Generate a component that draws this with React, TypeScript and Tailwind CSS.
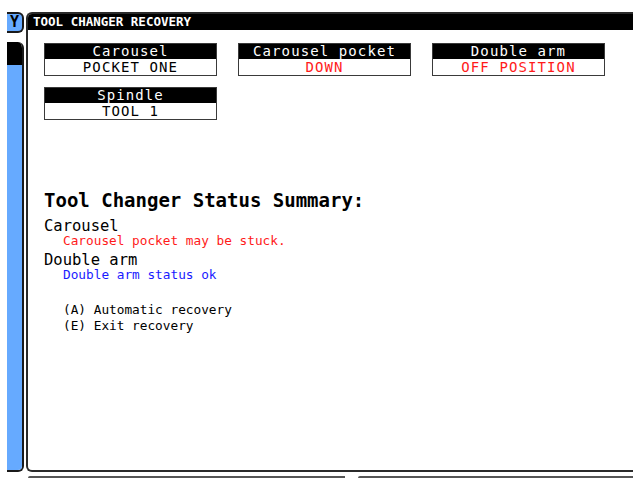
const mono = { fontFamily: '"DejaVu Sans Mono", "Liberation Mono", monospace' };

type Field = { label: string; value: string; alert?: boolean };

const fields: Field[] = [
  { label: "Carousel", value: "POCKET ONE" },
  { label: "Carousel pocket", value: "DOWN", alert: true },
  { label: "Double arm", value: "OFF POSITION", alert: true },
  { label: "Spindle", value: "TOOL 1" },
];

function FieldBox({ label, value, alert }: Field) {
  return (
    <div className="flex flex-col border border-[#3a3a3a]">
      <div className="h-[15px] bg-black text-center text-[14px] leading-[15px] tracking-[1.1px] text-white">
        {label}
      </div>
      <div
        className={`h-[16px] bg-white text-center text-[14px] leading-[16px] tracking-[1.1px] ${
          alert ? "text-[#ff1a1a]" : "text-black"
        }`}
      >
        {value}
      </div>
    </div>
  );
}

function SideRail() {
  return (
    <div className="flex w-[17px] shrink-0 flex-col">
      <div className="flex h-[21px] shrink-0 items-center justify-end overflow-hidden rounded-r-[6px] border-2 border-l-0 border-[#1a1a1a] bg-[#66aaff] pr-[3px] text-[15px] font-bold leading-[17px] text-black">
        Y
      </div>
      <div className="mt-[9px] flex flex-1 flex-col overflow-hidden rounded-tr-[6px] rounded-br-[6px] border-r-2 border-b-2 border-[#1a1a1a]">
        <div className="h-[23px] bg-black" />
        <div className="flex-1 bg-[#66aaff]" />
      </div>
    </div>
  );
}

export default function App() {
  return (
    <div className="flex h-[478px] w-[633px] flex-col overflow-hidden bg-white" style={mono}>
      <div className="flex flex-1 pt-[12px] pl-[7px]">
        <SideRail />

        <div className="ml-[2px] flex flex-1 flex-col overflow-hidden rounded-l-[6px] border-2 border-r-0 border-[#2a2a2a] bg-white">
          <div className="h-[16px] bg-black pl-[5px] text-[12.5px] font-bold leading-[16px] text-white">
            TOOL CHANGER RECOVERY
          </div>

          <div className="pt-[13px] pl-[16px]">
            <div className="grid grid-cols-[173px_173px_173px] gap-x-[21px] gap-y-[11px]">
              {fields.map((f) => (
                <FieldBox key={f.label} {...f} />
              ))}
            </div>

            <div className="mt-[69px] text-[19px] font-bold leading-[22px] text-black">
              Tool Changer Status Summary:
            </div>
            <div className="mt-[7px] text-[15.5px] leading-[16px] text-black">Carousel</div>
            <div className="pl-[19px] text-[12.75px] leading-[14px] text-[#ff1a1a]">
              Carousel pocket may be stuck.
            </div>
            <div className="mt-[4px] text-[15.5px] leading-[16px] text-black">Double arm</div>
            <div className="pl-[19px] text-[12.75px] leading-[14px] text-[#1a1aff]">
              Double arm status ok
            </div>
            <div className="mt-[20px] pl-[19px] text-[12.75px] leading-[16px] text-black">
              (A) Automatic recovery
            </div>
            <div className="pl-[19px] text-[12.75px] leading-[16px] text-black">
              (E) Exit recovery
            </div>
          </div>
        </div>
      </div>

      {/* tops of the lower panels */}
      <div className="mt-[4px] flex h-[2px] shrink-0 gap-[13px] pl-[28px]">
        <div className="w-[317px] rounded-tl-[4px] border-t-2 border-[#555]" />
        <div className="flex-1 rounded-tl-[4px] border-t-2 border-[#555]" />
      </div>
    </div>
  );
}
